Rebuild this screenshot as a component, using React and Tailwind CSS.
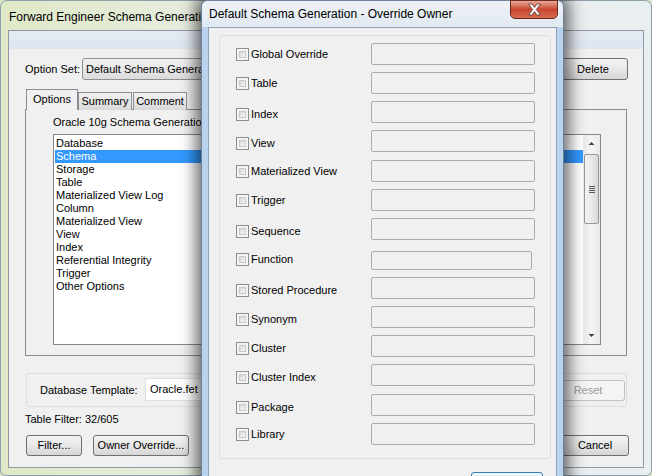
import React from 'react';

const listItems = [
    'Database',
    'Schema',
    'Storage',
    'Table',
    'Materialized View Log',
    'Column',
    'Materialized View',
    'View',
    'Index',
    'Referential Integrity',
    'Trigger',
    'Other Options'
];

// mt = gap above input, dy = label offset against input centre
const owners = [
    { label: 'Global Override', mt: 'mt-0', h: 'h-[22px]', w: 'w-[164px]', dy: 'translate-y-0' },
    { label: 'Table', mt: 'mt-[7px]', h: 'h-[22px]', w: 'w-[164px]', dy: 'translate-y-0' },
    { label: 'Index', mt: 'mt-[7px]', h: 'h-[22px]', w: 'w-[164px]', dy: 'translate-y-[2px]' },
    { label: 'View', mt: 'mt-[7px]', h: 'h-[22px]', w: 'w-[164px]', dy: 'translate-y-[2px]' },
    { label: 'Materialized View', mt: 'mt-[8px]', h: 'h-[22px]', w: 'w-[164px]', dy: 'translate-y-0' },
    { label: 'Trigger', mt: 'mt-[7px]', h: 'h-[22px]', w: 'w-[164px]', dy: 'translate-y-0' },
    { label: 'Sequence', mt: 'mt-[7px]', h: 'h-[22px]', w: 'w-[164px]', dy: 'translate-y-[2px]' },
    { label: 'Function', mt: 'mt-[11px]', h: 'h-[19px]', w: 'w-[161px]', dy: '-translate-y-[1px]' },
    { label: 'Stored Procedure', mt: 'mt-[7px]', h: 'h-[22px]', w: 'w-[164px]', dy: 'translate-y-[2px]' },
    { label: 'Synonym', mt: 'mt-[7px]', h: 'h-[22px]', w: 'w-[164px]', dy: 'translate-y-[2px]' },
    { label: 'Cluster', mt: 'mt-[7px]', h: 'h-[22px]', w: 'w-[164px]', dy: 'translate-y-[2px]' },
    { label: 'Cluster Index', mt: 'mt-[7px]', h: 'h-[22px]', w: 'w-[164px]', dy: 'translate-y-[2px]' },
    { label: 'Package', mt: 'mt-[8px]', h: 'h-[22px]', w: 'w-[164px]', dy: 'translate-y-[2px]' },
    { label: 'Library', mt: 'mt-[7px]', h: 'h-[22px]', w: 'w-[164px]', dy: 'translate-y-0' }
];

function Btn({ className = '', disabled, children }) {
    const tone = disabled
        ? 'border-[#bfc3c6] bg-[#f4f4f4] text-[#9a9a9a]'
        : 'border-[#707070] bg-linear-to-b from-[#f3f3f3] via-[#e8e8e8] to-[#d6d6d6] text-black';
    return (
        <div className={`flex items-center justify-center rounded-[3px] border ${tone} ${className}`}>
            {children}
        </div>
    );
}

function CheckBox() {
    return (
        <div className="w-[13px] h-[13px] border border-[#8e8f8f] bg-[#f4f4f4] p-[2px] shrink-0">
            <div className="w-full h-full border border-[#c9c9c9] bg-linear-to-br from-[#d6d6d6] to-[#f8f8f8]"></div>
        </div>
    );
}

function BackWindow() {
    return (
        <div className="absolute left-0 top-0 w-[652px] h-[476px] rounded-t-[7px] rounded-b-[6px] border border-[#8fa0ad] bg-linear-to-r from-[#dfe9c6] via-[#eceff0] to-[#e9eef0] flex flex-col">
            <div className="h-[29px] flex items-center pl-[8px] pt-[2px] text-[12px] text-black shrink-0">
                Forward Engineer Schema Generation
            </div>
            <div className="mx-[7px] h-[438px] border border-[#8d9aa6] bg-[#f0f0f0] flex flex-col">
                <div className="h-[18px] bg-linear-to-b from-[#e6ebf3] to-[#dfe6f1] border-b border-[#e3e7ec]"></div>

                <div className="mt-[9px] flex items-center pl-[16px] pr-[15px] h-[22px]">
                    <span className="w-[57px]">Option Set:</span>
                    <div className="w-[470px] h-[22px] rounded-[3px] border border-[#8e8f8f] bg-linear-to-b from-[#f2f2f2] to-[#dcdcdc] flex items-center pl-[3px]">
                        Default Schema Generation
                    </div>
                    <Btn className="ml-auto w-[70px] h-[22px]">Delete</Btn>
                </div>

                <div className="mt-[9px] ml-[17px] flex items-end h-[21px] relative z-10">
                    <div className="w-[52px] h-[21px] border border-b-0 border-[#898c95] bg-[#f0f0f0] flex items-center justify-center pb-[2px]">
                        Options
                    </div>
                    <div className="w-[54px] h-[18px] border border-b-0 border-[#898c95] bg-linear-to-b from-[#f2f2f2] to-[#d9d9d9] flex items-center justify-center">
                        Summary
                    </div>
                    <div className="ml-[1px] w-[54px] h-[18px] border border-b-0 border-[#898c95] bg-linear-to-b from-[#f2f2f2] to-[#d9d9d9] flex items-center justify-center">
                        Comment
                    </div>
                </div>
                <div className="-mt-px ml-[16px] w-[602px] h-[247px] border border-[#898c95] bg-[#f0f0f0] pl-[27px] pt-[6px]">
                    <div className="leading-[13px]">Oracle 10g Schema Generation</div>
                    <div className="mt-[5px] w-[548px] h-[211px] border border-[#828790] bg-white flex">
                        <div className="flex-1 pt-[2px] pl-[1px]">
                            {listItems.map((item) => (
                                <div
                                    key={item}
                                    className={`h-[13px] leading-[13px] pl-[1px] ${item === 'Schema' ? 'bg-[#3399ff] text-white' : ''}`}
                                >
                                    {item}
                                </div>
                            ))}
                        </div>
                        <div className="w-[17px] bg-linear-to-r from-[#e8e8e8] via-[#f5f5f5] to-[#e8e8e8] flex flex-col items-center">
                            <svg width="17" height="17" viewBox="0 0 17 17">
                                <path d="M5.5 10 L8.5 7 L11.5 10 Z" fill="#404040" />
                            </svg>
                            <div className="mt-[2px] w-[15px] h-[70px] rounded-[2px] border border-[#979797] bg-linear-to-r from-[#f4f4f4] via-[#e9e9e9] to-[#d8d8d8] flex flex-col items-center justify-center gap-[1px]">
                                <div className="w-[6px] h-px bg-[#5a5a5a]"></div>
                                <div className="w-[6px] h-px bg-[#5a5a5a]"></div>
                                <div className="w-[6px] h-px bg-[#5a5a5a]"></div>
                                <div className="w-[6px] h-px bg-[#5a5a5a]"></div>
                            </div>
                            <svg className="mt-auto" width="17" height="17" viewBox="0 0 17 17">
                                <path d="M5.5 7 L8.5 10 L11.5 7 Z" fill="#404040" />
                            </svg>
                        </div>
                    </div>
                </div>

                <div className="mt-[17px] ml-[17px] w-[601px] h-[34px] rounded-[3px] border border-[#d5dfe5] flex items-center pl-[13px] pr-[1px]">
                    <span className="w-[105px]">Database Template:</span>
                    <div className="w-[400px] h-[23px] border border-[#dbdfe6] bg-white flex items-center pl-[4px] -translate-y-[1px]">
                        Oracle.fet
                    </div>
                    <Btn disabled className="ml-auto w-[74px] h-[21px]">Reset</Btn>
                </div>

                <div className="mt-[6px] pl-[16px] leading-[13px]">Table Filter: 32/605</div>

                <div className="mt-[9px] pl-[17px] pr-[14px] flex items-center">
                    <Btn className="w-[56px] h-[21px]">Filter...</Btn>
                    <Btn className="ml-[11px] w-[96px] h-[21px]">Owner Override...</Btn>
                    <Btn className="ml-auto w-[68px] h-[21px]">Cancel</Btn>
                </div>
            </div>
        </div>
    );
}

function OwnerDialog() {
    return (
        <div className="absolute left-[201px] top-0 w-[363px] h-[500px] rounded-t-[6px] border border-[#6f8196] bg-[#b9d3ee] shadow-[0_0_16px_5px_rgba(0,0,0,0.6)] flex flex-col">
            <div className="relative h-[26px] shrink-0 rounded-t-[6px] bg-linear-to-b from-[#eef2f6] to-[#e1e9f1] flex items-center pl-[7px] text-[12px] text-black">
                Default Schema Generation - Override Owner
                <div className="absolute top-[-1px] right-[5px] w-[48px] h-[19px] rounded-b-[5px] border border-[#6b2a20] bg-linear-to-b from-[#e9a897] via-[#c8462e] to-[#d66a4f] flex items-center justify-center">
                    <svg width="15" height="13" viewBox="0 0 15 13">
                        <path d="M1.5 1 L5 1 L7.5 4.5 L10 1 L13.5 1 L9.3 6.5 L13.5 12 L10 12 L7.5 8.5 L5 12 L1.5 12 L5.7 6.5 Z" fill="#ffffff" stroke="#5b3a36" strokeWidth="0.8" />
                    </svg>
                </div>
            </div>
            <div className="mx-[6px] flex-1 border border-[#8ea3ba] bg-[#f0f0f0] flex flex-col">
                <div className="mt-[7px] ml-[10px] w-[332px] h-[424px] rounded-[3px] border border-[#d5dfe5] pt-[7px] pl-[16px]">
                    {owners.map((o) => (
                        <div key={o.label} className={`flex items-center ${o.mt}`}>
                            <div className={`w-[135px] flex items-center gap-[2px] ${o.dy}`}>
                                <CheckBox />
                                <span>{o.label}</span>
                            </div>
                            <div className={`${o.w} ${o.h} rounded-[2px] border border-[#acacac] bg-[#f0f0f0]`}></div>
                        </div>
                    ))}
                </div>
                <div className="mt-[13px] flex justify-end pr-[13px]">
                    <div className="w-[72px] h-[23px] rounded-[3px] border border-[#3c7fb1] bg-linear-to-b from-[#eaf6fd] to-[#bee6fd]"></div>
                </div>
            </div>
        </div>
    );
}

export default function App() {
    return (
        <div className="relative w-[652px] h-[476px] overflow-hidden bg-[#d8e4c4] font-['Liberation_Sans',Arial,sans-serif] text-[11px] text-black">
            <BackWindow />
            <OwnerDialog />
        </div>
    );
}
